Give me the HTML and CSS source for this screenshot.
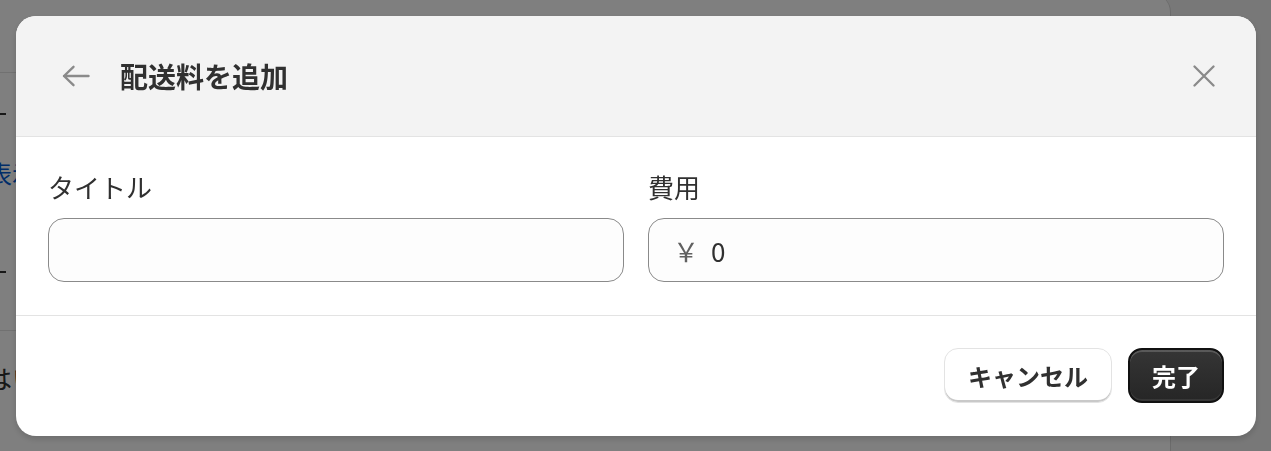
FILE: index.html
```html
<!DOCTYPE html>
<html lang="ja">
<head>
<meta charset="utf-8">
<title>配送料を追加</title>
<link rel="stylesheet" href="styles.css">
</head>
<body>
<div class="page">
  <div class="main">
    <div class="row row-top"></div>
    <div class="row row-mid">
      <span class="dash"></span>
      <span class="link">を表示</span>
      <span class="dash dash-low"></span>
    </div>
    <div class="row row-bottom"><span class="ghost">はい</span></div>
  </div>
  <div class="side"></div>
</div>

<div class="backdrop"></div>
<div class="modal" role="dialog" aria-label="配送料を追加">
  <header class="modal-header">
    <button class="icon-btn" aria-label="戻る">
      <svg width="28" height="22" viewBox="0 0 28 22" fill="none" stroke="#8a8a8a" stroke-width="2.4" stroke-linecap="round" stroke-linejoin="round">
        <path d="M26.5 11H2M11.5 1.8L2 11l9.5 9.2"/>
      </svg>
    </button>
    <h1 class="modal-title">配送料を追加</h1>
    <button class="icon-btn close-btn" aria-label="閉じる">
      <svg width="22" height="22" viewBox="0 0 22 22" fill="none" stroke="#8a8a8a" stroke-width="2.3" stroke-linecap="round">
        <path d="M1.5 1.5l19 19M20.5 1.5l-19 19"/>
      </svg>
    </button>
  </header>
  <section class="modal-body">
    <div class="field">
      <label class="field-label">タイトル</label>
      <div class="input"></div>
    </div>
    <div class="field">
      <label class="field-label">費用</label>
      <div class="input money">
        <span class="currency">￥</span>
        <span class="value">0</span>
      </div>
    </div>
  </section>
  <footer class="modal-footer">
    <button class="btn btn-secondary">キャンセル</button>
    <button class="btn btn-primary">完了</button>
  </footer>
</div>
</body>
</html>
```

FILE: styles.css
```css
html, body {
  margin: 0;
  padding: 0;
}
body {
  width: 1271px;
  height: 451px;
  overflow: hidden;
  background: #f1f1f1;
  font-family: "Noto Sans CJK JP", "Noto Sans", sans-serif;
  color: #303030;
}

/* underlying page */
.page {
  display: flex;
  height: 451px;
}
.main {
  width: 1170px;
  height: 470px;
  margin-top: -6px;
  background: #fff;
  border-right: 1px solid #d6d6d6;
  border-top-right-radius: 18px;
  display: flex;
  flex-direction: column;
}
.side {
  flex: 1;
}
.row-top {
  height: 78px;
  border-bottom: 1px solid #e3e3e3;
}
.row-mid {
  height: 257px;
  border-bottom: 1px solid #e3e3e3;
  display: flex;
  flex-direction: column;
  align-items: flex-start;
}
.dash {
  display: block;
  width: 6px;
  height: 2px;
  background: #303030;
  margin-top: 40px;
}
.dash-low {
  margin-top: 84px;
}
.link {
  display: block;
  margin-top: 44px;
  margin-left: -36px;
  font-size: 24px;
  line-height: 28px;
  color: #005bd3;
}
.ghost {
  display: block;
  margin-top: 28px;
  margin-left: -14px;
  font-size: 26px;
  color: #303030;
}

/* overlay */
.backdrop {
  position: fixed;
  inset: 0;
  background: rgba(0, 0, 0, 0.5);
}
.modal {
  position: fixed;
  left: 16px;
  top: 16px;
  width: 1240px;
  height: 420px;
  background: #fff;
  border-radius: 20px;
  overflow: hidden;
  box-shadow: 0 3px 6px rgba(0, 0, 0, 0.15);
  display: flex;
  flex-direction: column;
}
.modal-header {
  height: 121px;
  flex: none;
  box-sizing: border-box;
  background: #f3f3f3;
  border-bottom: 1px solid #e3e3e3;
  display: flex;
  align-items: center;
  padding: 0 32px 0 40px;
  gap: 24px;
}
.icon-btn {
  width: 40px;
  height: 40px;
  padding: 0;
  border: 0;
  background: transparent;
  display: flex;
  align-items: center;
  justify-content: center;
}
.close-btn {
  margin-left: auto;
}
.modal-title {
  margin: 0;
  font-size: 28px;
  font-weight: 700;
  line-height: 36px;
  color: #303030;
}

.modal-body {
  flex: none;
  display: grid;
  grid-template-columns: 1fr 1fr;
  gap: 24px;
  padding: 32px 32px 32px;
  border-bottom: 1px solid #e3e3e3;
  height: 179px;
  box-sizing: border-box;
}
.field {
  display: flex;
  flex-direction: column;
}
.field-label {
  font-size: 26px;
  line-height: 36px;
  margin-bottom: 13px;
  color: #303030;
}
.input {
  height: 64px;
  box-sizing: border-box;
  border: 1px solid #8a8a8a;
  border-radius: 16px;
  background: #fdfdfd;
}
.money {
  display: flex;
  align-items: center;
  padding-left: 24px;
  gap: 12px;
}
.currency {
  font-size: 26px;
  color: #616161;
}
.value {
  font-size: 26px;
  color: #303030;
}

.modal-footer {
  flex: 1;
  display: flex;
  justify-content: flex-end;
  align-items: center;
  padding: 0 32px 1px;
  gap: 16px;
}
.btn {
  height: 55px;
  box-sizing: border-box;
  border-radius: 14px;
  font-family: "Noto Sans CJK JP", "Noto Sans", sans-serif;
  font-size: 24px;
  font-weight: 700;
  line-height: 1;
  cursor: pointer;
}
.btn-secondary {
  background: #fff;
  color: #303030;
  border: 1px solid #e3e3e3;
  box-shadow: inset 0 -2px 0 #c9c9c9;
  padding: 0 23px;
}
.btn-primary {
  background: linear-gradient(#353535, #262626);
  color: #fff;
  border: 2px solid #111;
  box-shadow: inset 0 2px 0 rgba(255, 255, 255, 0.18), inset 0 -2px 0 rgba(255, 255, 255, 0.08);
  padding: 0 22px;
}
```
